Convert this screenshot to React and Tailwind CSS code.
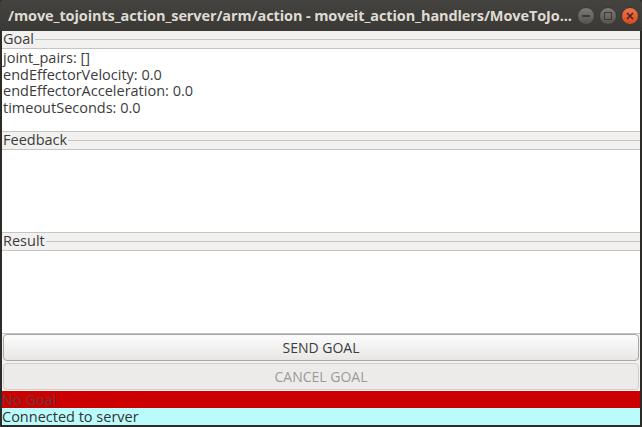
import React from 'react';

function Section({ title, lines = [] }) {
  return (
    <div className="flex flex-col">
      {/* group box header: label followed by a thin rule */}
      <div className="h-[17px] flex items-center">
        <span className="leading-none pl-[1px]">{title}</span>
        <div className="flex-1 h-px bg-[#c6c4c1] ml-px" />
      </div>
      <div className="bg-white border-t border-b border-[#c6c4c1] h-[84px] pt-[1px] leading-[16.7px]">
        {lines.map((l) => (
          <div key={l} className="pl-[1px]">{l}</div>
        ))}
      </div>
    </div>
  );
}

export default function App() {
  return (
    <div
      className="w-[642px] h-[427px] bg-[#2c2b28] flex flex-col overflow-hidden text-[#3c3c3c]"
      style={{ fontFamily: '"Open Sans", "DejaVu Sans", sans-serif' }}
    >
      {/* title bar */}
      <div className="h-[31px] shrink-0 flex items-center bg-gradient-to-b from-[#44433f] to-[#3a3935] pl-[8px] pr-[2px] rounded-t-[4px]">
        <div className="flex-1 text-[#dfdbd2] font-bold text-[14.5px] whitespace-nowrap overflow-hidden tracking-[-0.1px]">
          /move_tojoints_action_server/arm/action - moveit_action_handlers/MoveToJo...
        </div>
        <div className="flex items-center gap-[4px] pr-[1px]">
          <div className="w-[18px] h-[18px] rounded-full bg-gradient-to-b from-[#7b7a75] to-[#56554f] border border-[#3a3935] flex items-center justify-center">
            <div className="w-[8px] h-[2px] bg-[#3a3935] rounded" />
          </div>
          <div className="w-[18px] h-[18px] rounded-full bg-gradient-to-b from-[#7b7a75] to-[#56554f] border border-[#3a3935] flex items-center justify-center">
            <div className="w-[8px] h-[8px] border-[1.5px] border-[#3a3935]" />
          </div>
          <div className="w-[18px] h-[18px] rounded-full bg-gradient-to-b from-[#f2744a] to-[#d8471c] border border-[#3a3935] flex items-center justify-center">
            <svg width="8" height="8" viewBox="0 0 8 8">
              <path d="M1 1 L7 7 M7 1 L1 7" stroke="#3c2a22" strokeWidth="1.6" />
            </svg>
          </div>
        </div>
      </div>

      {/* client area */}
      <div className="flex-1 min-h-0 mx-[2px] mb-[2px] bg-[#f2f1f0] flex flex-col text-[14.5px]">
        <Section
          title="Goal"
          lines={[
            'joint_pairs: []',
            'endEffectorVelocity: 0.0',
            'endEffectorAcceleration: 0.0',
            'timeoutSeconds: 0.0',
          ]}
        />
        <Section title="Feedback" />
        <Section title="Result" />

        <div className="flex flex-col gap-[2px] px-[1px]">
          <button className="h-[27px] rounded-[4px] border border-[#a9a7a4] bg-gradient-to-b from-[#fcfcfc] to-[#e8e7e6] text-[#3c3c3c] text-[14px]">
            SEND GOAL
          </button>
          <button className="h-[27px] rounded-[4px] border border-[#d0cfcd] bg-[#ecebea] text-[#9b9a98] text-[14px]">
            CANCEL GOAL
          </button>
        </div>

        <div className="mt-[1px] h-[17px] bg-[#cc0000] text-[#6b3b3b] leading-[17px]">No Goal</div>
        <div className="h-[17px] bg-[#bbfbfb] text-[#333333] leading-[17px]">Connected to server</div>
      </div>
    </div>
  );
}
